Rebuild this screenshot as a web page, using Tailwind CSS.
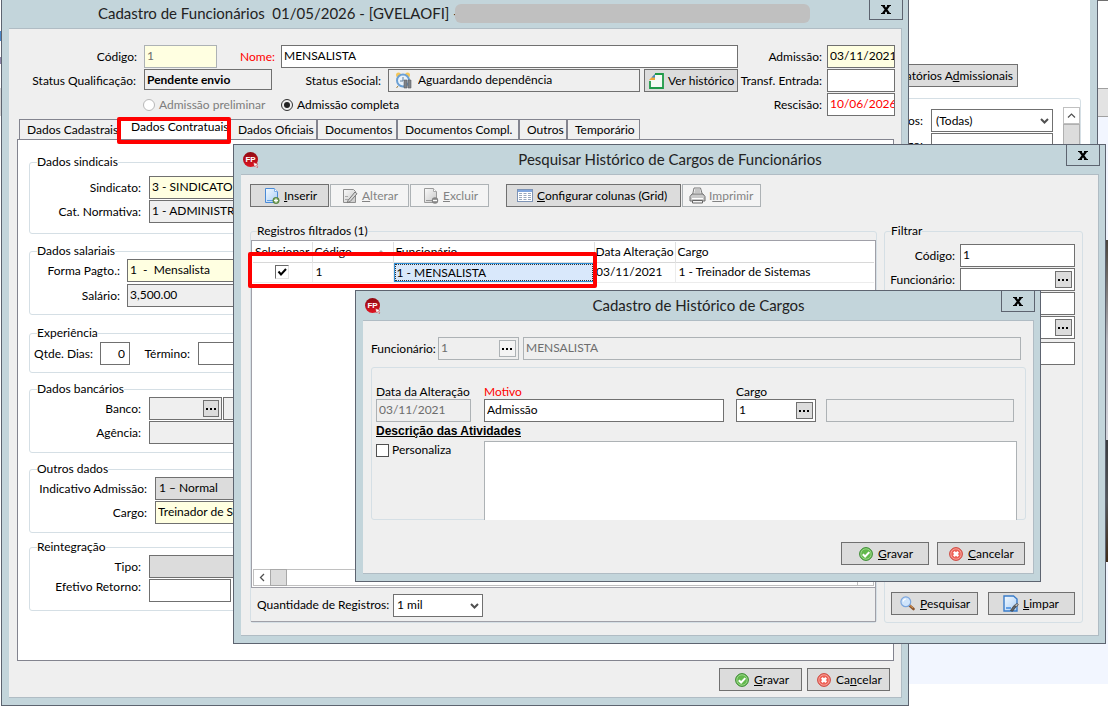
<!DOCTYPE html>
<html lang="pt-BR">
<head>
  <meta charset="UTF-8">
  <title>Cadastro de Funcionários</title>
  <script src="https://cdn.jsdelivr.net/npm/@tailwindcss/browser@4"></script>
</head>
<body class="font-['Lato','Open_Sans',sans-serif] text-[12px] leading-4 text-black">

  <!-- icons -->
  <svg class="absolute h-0 w-0">
    <defs>
      <linearGradient id="gBlue" x1="0" y1="0" x2="1" y2="1"><stop offset="0" stop-color="#f4faff"/><stop offset="1" stop-color="#a9cdf5"/></linearGradient>
      <linearGradient id="gGray" x1="0" y1="0" x2="1" y2="1"><stop offset="0" stop-color="#fafafa"/><stop offset="1" stop-color="#c8c8c8"/></linearGradient>
    </defs>
    <symbol id="cursor" viewBox="0 0 6 6"><path d="M.500.500l4.500 1.500-1.600 1 1.600 2-1 .700-1.600-2-1.200 1z" fill="#fff" stroke="#c01820" stroke-width=".500"/></symbol>
    <symbol id="ok" viewBox="0 0 14 14">
      <circle cx="7" cy="7" r="6.4" fill="#62b84c" stroke="#3c8a34"/>
      <circle cx="7" cy="7" r="5.2" fill="none" stroke="#a8dd98" stroke-width=".8"/>
      <path d="M3.8 7.2l2.3 2.3 4.2-4.4" fill="none" stroke="#fff" stroke-width="2"/>
    </symbol>
    <symbol id="no" viewBox="0 0 14 14">
      <circle cx="7" cy="7" r="6.4" fill="#ee6257" stroke="#cc4a42"/>
      <circle cx="7" cy="7" r="5.2" fill="none" stroke="#f8b3ab" stroke-width=".8"/>
      <path d="M4.8 4.8l4.4 4.4M9.2 4.8L4.8 9.2" stroke="#fff" stroke-width="2.4"/>
    </symbol>
    <symbol id="insert" viewBox="0 0 16 16">
      <path d="M1.5.5h9l3 3v11h-12z" fill="url(#gBlue)" stroke="#4a8ad6"/>
      <path d="M10.5.5v3h3" fill="#fff" stroke="#7fb0e8"/>
      <path d="M3 12.5h7" stroke="#5f9fe6"/>
      <circle cx="12" cy="12.5" r="3.2" fill="#6d9a50" stroke="#4d7838" stroke-width=".6"/>
      <path d="M12 10.5v4M10 12.5h4" stroke="#fff" stroke-width="1.3"/>
    </symbol>
    <symbol id="edit" viewBox="0 0 16 16">
      <path d="M1.5 1.5h10l2 2v11h-12z" fill="url(#gGray)" stroke="#8e8e8e"/>
      <path d="M3 11.5h5M3 8.5h3" stroke="#aaa"/>
      <path d="M6 12.5L13 4l2 1.7-7 8-2.6.9z" fill="#d8d8d8" stroke="#777"/>
    </symbol>
    <symbol id="remove" viewBox="0 0 16 16">
      <path d="M1.5.5h9l3 3v11h-12z" fill="url(#gGray)" stroke="#9a9a9a"/>
      <path d="M10.5.5v3h3" fill="#fff" stroke="#aaa"/>
      <path d="M3 12.5h7" stroke="#999"/>
      <circle cx="12" cy="12.5" r="3.2" fill="#858585"/>
      <path d="M10 12.5h4" stroke="#fff" stroke-width="1.4"/>
    </symbol>
    <symbol id="columns" viewBox="0 0 16 14">
      <rect x=".5" y=".5" width="15" height="12" fill="#fff" stroke="#7d93b5"/>
      <path d="M1 1h14v2H1z" fill="#7fa5dd"/>
      <path d="M2 4.500h3M6.500 4.500h3M11 4.500h3M2 6.500h3M6.500 6.500h3M11 6.500h3M2 8.500h3M6.500 8.500h3M11 8.500h3M2 10.500h3M6.500 10.500h3M11 10.500h3" stroke="#9aa9bd"/>
    </symbol>
    <symbol id="printer" viewBox="0 0 17 17">
      <path d="M3.5 8l1.500-7h6.500l2 7" fill="#f2f2f2" stroke="#7a7a7a"/>
      <path d="M6 3h5M5.500 5h6" stroke="#999"/>
      <path d="M1 14V9.500L3 7h11l2 2.500V14z" fill="#c9c9c9" stroke="#6f6f6f"/>
      <path d="M3 11.500h11" stroke="#fff"/>
      <path d="M3.500 13.500h10V16h-10z" fill="#f4f4f4" stroke="#666"/>
    </symbol>
    <symbol id="lens" viewBox="0 0 15 15">
      <path d="M9 9l4.500 4" stroke="#8a5630" stroke-width="2.600" stroke-linecap="round"/>
      <path d="M9.500 9l3.500 3" stroke="#e09a50" stroke-width="1"/>
      <circle cx="5.800" cy="5.800" r="4.900" fill="#cfe4fb" stroke="#7ba6de" stroke-width="1.200"/>
      <path d="M3.200 5.500a3 3 0 0 1 2.800-2.500" stroke="#fff" fill="none" stroke-width="1.200"/>
    </symbol>
    <symbol id="clean" viewBox="0 0 16 17">
      <path d="M1 1h9.500l3.500 3v12H1z" fill="url(#gBlue)" stroke="#3a7cc9" stroke-width="1.400"/>
      <path d="M3 13h5" stroke="#4a90e0" stroke-width="1.600"/>
      <path d="M7.500 15.500l3.500-5 2 1.300-3.500 4.500z" fill="#666" stroke="#333" stroke-width=".7"/>
      <path d="M11.500 10l2.500-1.500 1.400 1-2 2.500z" fill="#bbb" stroke="#444" stroke-width=".7"/>
    </symbol>
    <symbol id="dots" viewBox="0 0 11 2"><path d="M0 0h2v2H0zM4 0h2v2H4zM8 0h2v2H8z"/></symbol>
    <symbol id="chevron" viewBox="0 0 9 6"><path d="M1 1l3.500 3.500L8 1" fill="none" stroke="#505050" stroke-width="2"/></symbol>
    <symbol id="close" viewBox="0 0 10 9"><path d="M0 .5h4M6 .5h4M0 8.500h4M6 8.500h4" stroke="#000"/><path d="M2 .5l6 8M8 .5l-6 8" stroke="#000" stroke-width="2.200"/></symbol>
  </svg>

  <main class="relative h-screen overflow-hidden bg-white">

    <!-- desktop behind the windows -->
    <div class="absolute left-0 top-0 flex h-full w-px flex-col">
      <div class="h-[31px]"></div>
      <div class="h-[10px] bg-[#4a86c8]"></div>
      <div class="mt-[16px] h-[7px] bg-[#8f86a8]"></div>
      <div class="mt-[24px] h-[28px] bg-[#d8d8d8]"></div>
    </div>
    <div class="absolute right-0 top-0 flex h-full w-[200px] flex-col">
      <div class="h-[88px] border-t border-[#707070] bg-white"></div>
      <div class="h-[29px] border-y border-[#a0a0a0] bg-[#e3e3e3]"></div>
      <div class="h-[123px] bg-[#f2f6ff]"></div>
      <div class="h-[200px] bg-linear-to-b from-[#4a443c] via-[#b4b4bc] to-[#d6d6de]"></div>
      <div class="h-[122px] bg-linear-to-b from-[#3a3c40] via-[#55585c] to-[#402c18]"></div>
      <div class="h-[122px] bg-[#f2f6ff]"></div>
    </div>

    <section class="absolute left-[700px] top-0 flex h-[500px] w-[398px] flex-col border-r border-[#5d6470] bg-[#c3d5db] pr-[7px]">
      <div class="flex-1 bg-white pt-[64px]">
        <button class="ml-[180px] block h-[23px] w-[138px] border border-[#707070] bg-[#dcdcdc] pr-1 text-right whitespace-nowrap">Relatórios A<u>d</u>missionais</button>
        <div class="mr-[9px] mt-[11px] flex h-[300px] items-start justify-end rounded-[3px] border border-[#d5dfe5] pt-[8px]">
          <div class="flex w-[223px] flex-col gap-px pt-[2px]">
            <div class="flex items-center">
              <label for="bgVinc" class="w-[101px] pr-[8px] text-right">Vínculos:</label>
              <span class="relative flex-1">
                <select id="bgVinc" class="h-[23px] w-full appearance-none border border-[#707070] bg-white pl-1"><option>(Todas)</option></select>
                <svg class="pointer-events-none absolute right-1 top-[9px] h-[6px] w-[9px]"><use href="#chevron"/></svg>
              </span>
            </div>
            <div class="flex items-center">
              <label for="bgCargo" class="w-[101px] pr-[8px] text-right">Cargo:</label>
              <input id="bgCargo" class="h-[23px] min-w-0 flex-1 border border-[#707070] bg-white">
            </div>
          </div>
          <div class="ml-[10px] flex w-[17px] flex-col">
            <button aria-label="Subir" class="flex h-[17px] items-center justify-center border border-[#c0c0c0] bg-white">
              <svg viewBox="0 0 9 5" class="h-[5px] w-[9px]"><path d="M1 4.500L4.500 1 8 4.500" fill="none" stroke="#505050" stroke-width="1.200"/></svg>
            </button>
            <div class="h-[120px] border border-[#b0b0b0] bg-[#dcdcdc]"></div>
          </div>
        </div>
      </div>
    </section>

    <!-- Cadastro de Funcionários -->
    <section class="absolute -top-[2px] left-[1px] flex h-[708px] w-[908px] flex-col border border-[#5d6470] bg-[#c3d5db] pb-[7px] pl-[7px] pr-[6px]">
      <header class="flex h-[29px] items-center">
        <h1 class="ml-[89px] w-[357px] pb-[2px] text-[15px] leading-5 whitespace-pre text-[#222]">Cadastro de Funcionários  01/05/2026 - [GVELAOFI] -</h1>
        <div class="h-[19px] w-[355px] rounded-[6px] bg-[#c0c0c0]"></div>
        <button aria-label="Fechar" class="-mr-px -mt-px ml-auto flex h-[22px] w-[34px] items-center justify-center self-start border border-[#5d6470]"><svg class="h-[9px] w-[10px]"><use href="#close"/></svg></button>
      </header>

      <div class="flex flex-1 flex-col border-y border-r border-[#b0bcc4] bg-[#efefef]">
        <div class="flex pr-[6px] pt-4">
          <div class="flex flex-1 flex-col gap-px">
            <div class="flex h-[23px] items-center">
              <label for="codigo" class="w-[135px] pr-[7px] text-right">Código:</label>
              <input id="codigo" value="1" disabled class="h-[23px] w-[73px] border border-[#adb2b5] bg-[#ffffe1] pb-[2px] pl-[2px] text-[#6d6d6d]">
              <label for="nome" class="w-[64px] pr-[6px] text-right text-[#f00]">Nome:</label>
              <input id="nome" value="MENSALISTA" class="h-[23px] min-w-0 flex-1 border border-[#707070] bg-white pb-[2px] pl-[2px]">
            </div>
            <div class="flex h-[23px] items-center">
              <label for="qualif" class="w-[135px] pr-[8px] text-right whitespace-nowrap">Status Qualificação:</label>
              <input id="qualif" value="Pendente envio" readonly class="h-[21px] w-[128px] self-start border border-[#707070] pl-[2px] font-bold">
              <label for="esocial" class="w-[116px] pr-[7px] text-right">Status eSocial:</label>
              <div class="flex h-[23px] min-w-0 flex-1 items-center gap-[6px] border border-[#707070] pl-[6px]">
                <svg viewBox="0 0 17 17" class="h-[17px] w-[17px] shrink-0">
                  <circle cx="3.500" cy="3" r="2.500" fill="#f3c65a"/><circle cx="12.500" cy="3" r="2.500" fill="#f3c65a"/>
                  <path d="M3 14l-1.500 2M13 14l1.500 2" stroke="#a08040"/>
                  <circle cx="8" cy="8.500" r="6" fill="#eaf3fb" stroke="#6ba0d4" stroke-width="2"/>
                  <path d="M8 5v4h-3" fill="none" stroke="#6080a0"/>
                  <path d="M9 8h3v8H9zM13 8h3v8h-3z" fill="#808488" stroke="#5c6064" stroke-width=".600"/>
                </svg>
                <input id="esocial" value="Aguardando dependência" readonly class="min-w-0 flex-1 pb-[2px]">
              </div>
              <button class="ml-1 flex h-[23px] w-[94px] items-center gap-[4px] border border-[#707070] bg-[#dcdcdc] pl-[4px] whitespace-nowrap">
                <svg viewBox="0 0 15 16" class="h-[16px] w-[15px] shrink-0">
                  <path d="M6 1h8v14H1V8" fill="#f4faf4" stroke="#1f9a48" stroke-width="1.800"/>
                  <path d="M0 7l6-6v6z" fill="#f0a838"/><path d="M2.500 4.500L6 1v3.500z" fill="#3a88c8"/>
                </svg>
                Ver histórico
              </button>
            </div>
            <div class="flex h-[23px] items-center">
              <label class="ml-[134px] flex w-[138px] items-center gap-[4px] whitespace-nowrap text-[#7d7d7d]">
                <input type="radio" name="adm" disabled class="h-[12px] w-[12px] appearance-none rounded-full border border-[#b8b8b8] bg-white">Admissão preliminar
              </label>
              <label class="flex items-center gap-[4px] whitespace-nowrap">
                <input type="radio" name="adm" checked class="h-[12px] w-[12px] appearance-none rounded-full border border-[#333] bg-[#222] bg-clip-content p-[2px]">Admissão completa
              </label>
            </div>
          </div>
          <div class="flex w-[157px] flex-col gap-px">
            <div class="flex items-center justify-end gap-[5px]">
              <label for="admissao">Admissão:</label>
              <input id="admissao" value="03/11/2021" class="h-[23px] w-[68px] border border-[#707070] bg-[#ffffe1] pb-[2px] pl-[2px]">
            </div>
            <div class="flex items-center justify-end gap-[5px]">
              <label for="transf" class="whitespace-nowrap">Transf. Entrada:</label>
              <input id="transf" class="h-[23px] w-[68px] border border-[#707070] bg-white pb-[2px] pl-[2px]">
            </div>
            <div class="flex items-center justify-end gap-[5px]">
              <label for="rescisao">Rescisão:</label>
              <input id="rescisao" value="10/06/2026" class="h-[23px] w-[68px] border border-[#707070] bg-white pb-[2px] pl-[2px] text-[#f00]">
            </div>
          </div>
        </div>

        <!-- tabs -->
        <div role="tablist" class="mt-[3px] flex h-5 pl-[10px] whitespace-nowrap">
          <button role="tab" class="w-[100px] border-l border-t border-[#83848f] bg-[#f0f0f0] pl-[7px] text-left">Dados Cadastrais</button>
          <button role="tab" aria-selected="true" class="relative w-[112px] bg-white pb-[4px] pl-[12px] text-left">Dados Contratuais<span class="absolute -left-[2px] -top-[2px] h-[27px] w-[114px] rounded-[2px] border-4 border-[#f00]"></span></button>
          <button role="tab" class="w-[86px] border-r border-t border-[#83848f] bg-[#f0f0f0] pl-[7px] text-left">Dados Oficiais</button>
          <button role="tab" class="w-[80px] border-x border-t border-[#83848f] bg-[#f0f0f0] pl-[7px] text-left">Documentos</button>
          <button role="tab" class="w-[122px] border-x border-t border-[#83848f] bg-[#f0f0f0] pl-[7px] text-left">Documentos Compl.</button>
          <button role="tab" class="w-[48px] border-x border-t border-[#83848f] bg-[#f0f0f0] pl-[7px] text-left">Outros</button>
          <button role="tab" class="w-[73px] border-x border-t border-[#83848f] bg-[#f0f0f0] pl-[7px] text-left">Temporário</button>
        </div>

        <div class="ml-[8px] mr-[7px] flex flex-1 flex-col border border-[#83848f] bg-white px-[11px] pt-[14px]">
          <fieldset class="flex flex-col gap-px rounded-[3px] border border-[#d5dfe5] pb-[10px] pt-[6px]">
            <legend class="ml-[7px]">Dados sindicais</legend>
            <div class="flex items-center"><label for="sindicato" class="w-[119px] pr-[8px] text-right">Sindicato:</label><input id="sindicato" value="3 - SINDICATO TRABALHADORES" class="h-[23px] flex-1 border border-[#707070] bg-[#ffffe1] pb-[2px] pl-[2px]"></div>
            <div class="flex items-center"><label for="catnorm" class="w-[119px] pr-[8px] text-right">Cat. Normativa:</label><input id="catnorm" value="1 - ADMINISTRATIVO" class="h-[23px] flex-1 border border-[#707070] bg-[#efefef] pb-[2px] pl-[2px]"></div>
          </fieldset>
          <fieldset class="mt-[9px] flex flex-col gap-[2px] rounded-[3px] border border-[#d5dfe5] pb-[7px]">
            <legend class="ml-[7px]">Dados salariais</legend>
            <div class="flex items-center"><label for="forma" class="w-[97px] pr-[7px] text-right">Forma Pagto.:</label><input id="forma" value="1  -  Mensalista" class="h-[23px] flex-1 border border-[#707070] bg-[#ffffe1] pb-[2px] pl-[2px]"></div>
            <div class="flex items-center"><label for="salario" class="w-[97px] pr-[7px] text-right">Salário:</label><input id="salario" value="3,500.00" class="h-[23px] flex-1 border border-[#707070] bg-[#efefef] pb-[2px] pl-[2px]"></div>
          </fieldset>
          <fieldset class="mt-[10px] rounded-[3px] border border-[#d5dfe5] pb-[7px] pt-px">
            <legend class="ml-[7px]">Experiência</legend>
            <div class="flex items-center">
              <label for="dias" class="w-[70px] pr-[7px] text-right">Qtde. Dias:</label>
              <input id="dias" value="0" class="h-[23px] w-[30px] border border-[#707070] bg-white px-1 text-right">
              <label for="termino" class="w-[68px] pr-[8px] text-right">Término:</label>
              <input id="termino" class="h-[23px] w-[80px] border border-[#707070] bg-white pb-[2px] pl-[2px]">
            </div>
          </fieldset>
          <fieldset class="mt-[8px] flex flex-col gap-px rounded-[3px] border border-[#d5dfe5] pb-[8px]">
            <legend class="ml-[7px]">Dados bancários</legend>
            <div class="flex items-center">
              <label for="banco" class="w-[119px] pr-[8px] text-right">Banco:</label>
              <div class="flex h-[23px] w-[73px] items-center border border-[#707070] bg-[#efefef] pr-[2px]">
                <input id="banco" class="min-w-0 flex-1"><button aria-label="Buscar banco" class="flex h-[17px] w-[16px] items-center justify-center border border-[#707070] bg-[#dcdcdc]"><svg class="h-[2px] w-[11px]"><use href="#dots"/></svg></button>
              </div>
              <input aria-label="Nome do banco" class="ml-px h-[23px] flex-1 border border-[#707070] bg-[#efefef]">
            </div>
            <div class="flex items-center"><label for="agencia" class="w-[119px] pr-[8px] text-right">Agência:</label><input id="agencia" class="h-[23px] flex-1 border border-[#707070] bg-[#efefef]"></div>
          </fieldset>
          <fieldset class="mt-[8px] flex flex-col gap-px rounded-[3px] border border-[#d5dfe5] pb-[8px]">
            <legend class="ml-[7px]">Outros dados</legend>
            <div class="flex items-center"><label for="indic" class="w-[125px] pr-[8px] text-right whitespace-nowrap">Indicativo Admissão:</label><select id="indic" class="h-[23px] flex-1 appearance-none border border-[#707070] bg-[#dcdcdc] pb-[2px] pl-[3px]"><option>1 – Normal</option></select></div>
            <div class="flex items-center"><label for="cargo1" class="w-[125px] pr-[8px] text-right">Cargo:</label><input id="cargo1" value="Treinador de Sistemas" class="h-[23px] flex-1 border border-[#707070] bg-[#ffffe1] pb-[2px] pl-[2px]"></div>
          </fieldset>
          <fieldset class="mt-[6px] flex flex-col gap-px rounded-[3px] border border-[#d5dfe5] pb-[8px]">
            <legend class="ml-[7px]">Reintegração</legend>
            <div class="flex items-center"><label for="tipo" class="w-[119px] pr-[8px] text-right">Tipo:</label><select id="tipo" class="h-[23px] flex-1 appearance-none border border-[#707070] bg-[#dcdcdc]"><option></option></select></div>
            <div class="flex items-start"><label for="retorno" class="w-[119px] pr-[8px] text-right">Efetivo Retorno:</label><input id="retorno" class="h-[23px] w-[82px] border border-[#707070] bg-white pb-[2px] pl-[2px]"></div>
          </fieldset>
        </div>

        <div class="flex justify-end gap-[5px] pb-[6px] pr-[11px] pt-[7px]">
          <button class="flex h-[23px] w-[83px] items-center gap-[5px] border border-[#707070] bg-[#dcdcdc] pl-[15px]"><svg class="h-[14px] w-[14px]"><use href="#ok"/></svg><span><u>G</u>ravar</span></button>
          <button class="flex h-[23px] w-[83px] items-center gap-[5px] border border-[#707070] bg-[#dcdcdc] pl-[9px]"><svg class="h-[14px] w-[14px]"><use href="#no"/></svg><span>Ca<u>n</u>celar</span></button>
        </div>
      </div>
    </section>

    <!-- Pesquisar Histórico -->
    <section class="absolute left-[233px] top-[144px] flex h-[500px] w-[873px] flex-col border border-[#5d6470] bg-[#c3d5db] pb-[7px] pl-[7px] pr-[6px]">
      <header class="grid h-[29px] grid-cols-[1fr_auto_1fr] items-center">
        <span class="relative ml-[2px] flex h-[15px] w-[15px] items-center justify-center rounded-full bg-linear-to-b from-[#8f0a12] to-[#e01422] font-['Liberation_Sans',sans-serif] text-[8px] leading-none font-bold text-white">FP<svg class="absolute -bottom-px -right-px h-[6px] w-[6px]"><use href="#cursor"/></svg></span>
        <h2 class="pb-[2px] text-[15px] leading-5 text-[#222]">Pesquisar Histórico de Cargos de Funcionários</h2>
        <button aria-label="Fechar" class="-mr-px -mt-px flex h-[22px] w-[34px] items-center justify-center self-start justify-self-end border border-[#5d6470]"><svg class="h-[9px] w-[10px]"><use href="#close"/></svg></button>
      </header>

      <div class="flex flex-1 flex-col border-y border-r border-[#b0bcc4] bg-[#efefef] pb-[12px] pl-[9px] pr-[15px] pt-[9px]">
        <div class="flex gap-px whitespace-nowrap">
          <button class="flex h-[23px] w-[79px] items-center gap-[4px] border border-[#707070] bg-[#dcdcdc] pl-[13px]"><svg class="h-4 w-4"><use href="#insert"/></svg><span><u>I</u>nserir</span></button>
          <button disabled class="flex h-[23px] w-[79px] items-center gap-[4px] border border-[#adb2b5] bg-[#f4f4f4] pl-[11px] text-[#838383]"><svg class="h-4 w-4"><use href="#edit"/></svg><span><u>A</u>lterar</span></button>
          <button disabled class="flex h-[23px] w-[79px] items-center gap-[4px] border border-[#adb2b5] bg-[#f4f4f4] pl-[12px] text-[#838383]"><svg class="h-4 w-4"><use href="#remove"/></svg><span><u>E</u>xcluir</span></button>
          <button class="ml-4 flex h-[23px] w-[175px] items-center gap-[4px] border border-[#707070] bg-[#dcdcdc] pl-[10px]"><svg class="h-[14px] w-4"><use href="#columns"/></svg><span><u>C</u>onfigurar colunas (Grid)</span></button>
          <button disabled class="flex h-[23px] w-[79px] items-center gap-[3px] border border-[#adb2b5] bg-[#f4f4f4] pl-[6px] text-[#838383]"><svg class="h-[17px] w-[17px]"><use href="#printer"/></svg><span>I<u>m</u>primir</span></button>
        </div>

        <div class="mt-4 flex flex-1 gap-[7px]">
          <fieldset class="flex min-w-0 flex-1 flex-col rounded-[3px] border border-[#d5dfe5] pt-px">
            <legend class="ml-[6px]">Registros filtrados (1)</legend>
            <div class="relative flex flex-1 flex-col border border-[#a0a0a8] bg-white p-px">
              <table class="w-full table-fixed border-collapse whitespace-nowrap">
                <thead>
                  <tr class="h-[20px] border-b border-[#d8d8d8] text-left align-middle">
                    <th class="w-[59px] border-r border-[#e0e0e0] pl-[2px] font-normal">Selecionar</th>
                    <th class="w-[81px] border-r border-[#e0e0e0] pl-[2px] pr-[8px] font-normal"><span class="flex items-center justify-between">Código<svg viewBox="0 0 8 4" class="h-1 w-2"><path d="M0 4l4-4 4 4z" fill="#a8a8a8"/></svg></span></th>
                    <th class="w-[201px] border-r border-[#e0e0e0] pl-[2px] font-normal">Funcionário</th>
                    <th class="w-[81px] border-r border-[#e0e0e0] pl-px font-normal">Data Alteração</th>
                    <th class="pl-[2px] font-normal">Cargo</th>
                  </tr>
                </thead>
                <tbody>
                  <tr class="h-[20px] border-b border-[#ececec]">
                    <td class="border-r border-[#ececec]">
                      <label class="relative mx-auto block h-[14px] w-[14px]">
                        <input type="checkbox" checked aria-label="Selecionar registro" class="block h-[14px] w-[14px] appearance-none border border-b-[#e3e3e3] border-l-[#696969] border-r-[#e3e3e3] border-t-[#696969] bg-white">
                        <svg viewBox="0 0 14 14" class="pointer-events-none absolute left-0 top-0 h-[14px] w-[14px]"><path d="M3.500 6.500l2.500 3 5-5.500" fill="none" stroke="#000" stroke-width="2"/></svg>
                      </label>
                    </td>
                    <td class="border-r border-[#ececec] pl-[3px]">1</td>
                    <td class="p-0"><div class="flex h-[19px] items-center border border-[#2f8fd8] bg-[#d9e8fb]"><div class="h-[17px] flex-1 border border-dotted border-[#333] pl-px leading-[15px]">1 - MENSALISTA</div></div></td>
                    <td class="border-r border-[#ececec] pl-[2px]">03/11/2021</td>
                    <td class="pl-[3px]">1 - Treinador de Sistemas</td>
                  </tr>
                </tbody>
              </table>
              <div class="absolute -left-[4px] top-[11px] h-[36px] w-[349px] rounded-[2px] border-4 border-[#f00]"></div>
              <div class="mt-auto flex h-[17px] border border-[#c0c0c0] bg-white">
                <button aria-label="Rolar à esquerda" class="flex w-4 items-center justify-center"><svg viewBox="0 0 6 9" class="h-[9px] w-[6px]"><path d="M5 1L1.500 4.500 5 8" fill="none" stroke="#505050" stroke-width="1.300"/></svg></button>
                <div class="-my-px w-[17px] border border-[#a8a8a8] bg-[#dcdcdc]"></div>
                <div class="ml-auto w-4 border-l border-[#c0c0c0]"></div>
              </div>
            </div>
            <div class="flex h-[34px] items-center border-b border-r border-[#a0a0a8] pl-[6px] pt-px">
              <label for="qtd" class="w-[136px] whitespace-nowrap">Quantidade de Registros:</label>
              <span class="relative w-[90px]">
                <select id="qtd" class="block h-[23px] w-full appearance-none border border-[#707070] bg-white pl-[3px]"><option>1 mil</option></select>
                <svg class="pointer-events-none absolute right-1 top-[9px] h-[6px] w-[9px]"><use href="#chevron"/></svg>
              </span>
            </div>
          </fieldset>

          <fieldset class="flex w-[199px] shrink-0 flex-col gap-px rounded-[3px] border border-[#d5dfe5] pb-[7px] pl-[5px] pr-[7px] pt-[5px]">
            <legend class="ml-[1px]">Filtrar</legend>
            <div class="flex items-center"><label for="fCod" class="w-[70px] pr-[5px] text-right">Código:</label><input id="fCod" value="1" class="h-[23px] w-0 min-w-0 flex-1 border border-[#707070] bg-white pb-[2px] pl-[2px]"></div>
            <div class="flex items-center">
              <label for="fFunc" class="flex w-[70px] justify-end pr-[5px]">Funcionário:</label>
              <div class="flex h-[23px] w-0 min-w-0 flex-1 items-center border border-[#707070] bg-white pr-[2px]"><input id="fFunc" class="w-0 min-w-0 flex-1"><button aria-label="Buscar funcionário" class="flex h-[17px] w-[17px] items-center justify-center border border-[#707070] bg-[#dcdcdc]"><svg class="h-[2px] w-[11px]"><use href="#dots"/></svg></button></div>
            </div>
            <div class="flex items-center"><label for="fData" class="w-[70px] pr-[5px] text-right">Data:</label><input id="fData" class="h-[23px] w-0 min-w-0 flex-1 border border-[#707070] bg-white pb-[2px] pl-[2px]"></div>
            <div class="flex items-center">
              <label for="fCargo" class="w-[70px] pr-[5px] text-right">Cargo:</label>
              <div class="flex h-[23px] w-0 min-w-0 flex-1 items-center border border-[#707070] bg-white pr-[2px]"><input id="fCargo" class="w-0 min-w-0 flex-1"><button aria-label="Buscar cargo" class="flex h-[17px] w-[17px] items-center justify-center border border-[#707070] bg-[#dcdcdc]"><svg class="h-[2px] w-[11px]"><use href="#dots"/></svg></button></div>
            </div>
            <div class="mt-[2px] flex items-center"><label for="fMot" class="w-[70px] pr-[5px] text-right">Motivo:</label><input id="fMot" class="h-[23px] w-0 min-w-0 flex-1 border border-[#707070] bg-white pb-[2px] pl-[2px]"></div>
            <div class="mt-auto flex justify-between pl-px">
              <button class="flex h-[23px] w-[87px] items-center gap-[5px] border border-[#707070] bg-[#dcdcdc] pl-[8px]"><svg class="h-[15px] w-[15px]"><use href="#lens"/></svg><span><u>P</u>esquisar</span></button>
              <button class="flex h-[23px] w-[87px] items-center gap-[4px] border border-[#707070] bg-[#dcdcdc] pl-[14px]"><svg class="h-[17px] w-4"><use href="#clean"/></svg><span><u>L</u>impar</span></button>
            </div>
          </fieldset>
        </div>
      </div>
    </section>

    <!-- Cadastro de Histórico de Cargos -->
    <section class="absolute left-[355px] top-[290px] flex w-[686px] flex-col border border-[#5d6470] bg-[#c3d5db] pb-[7px] pl-[7px] pr-[6px]">
      <header class="grid h-[29px] grid-cols-[1fr_auto_1fr] items-center">
        <span class="relative ml-[2px] flex h-[15px] w-[15px] items-center justify-center rounded-full bg-linear-to-b from-[#8f0a12] to-[#e01422] font-['Liberation_Sans',sans-serif] text-[8px] leading-none font-bold text-white">FP<svg class="absolute -bottom-px -right-px h-[6px] w-[6px]"><use href="#cursor"/></svg></span>
        <h2 class="pb-[2px] text-[15px] leading-5 text-[#222]">Cadastro de Histórico de Cargos</h2>
        <button aria-label="Fechar" class="-mr-px -mt-px flex h-[22px] w-[34px] items-center justify-center self-start justify-self-end border border-[#5d6470]"><svg class="h-[9px] w-[10px]"><use href="#close"/></svg></button>
      </header>

      <div class="border-y border-r border-[#b0bcc4] bg-[#efefef] pb-[8px] pl-[8px] pr-[7px] pt-4">
        <div class="flex items-center pr-[5px]">
          <label for="hFunc" class="w-[67px] whitespace-nowrap">Funcionário:</label>
          <div class="flex h-[23px] w-[81px] items-center border border-[#adb2b5] pl-[2px] pr-[2px]"><input id="hFunc" value="1" disabled class="min-w-0 flex-1 pb-[2px] text-[#6d6d6d]"><button disabled aria-label="Buscar funcionário" class="flex h-[17px] w-[17px] items-center justify-center border border-[#adb2b5] bg-[#f4f4f4]"><svg class="h-[2px] w-[11px]"><use href="#dots"/></svg></button></div>
          <input aria-label="Nome do funcionário" value="MENSALISTA" disabled class="ml-1 h-[23px] min-w-0 flex-1 border border-[#adb2b5] pb-[2px] pl-[2px] text-[#6d6d6d]">
        </div>

        <div class="mt-[7px] rounded-[3px] border border-[#d5dfe5] pl-1 pr-[8px] pt-4">
          <div class="flex items-end pr-[3px] leading-[15px]">
            <div class="mr-[13px] w-[95px]">
              <label for="hData" class="block whitespace-nowrap">Data da Alteração</label>
              <input id="hData" value="03/11/2021" disabled class="block h-[23px] w-full border border-[#adb2b5] pb-[2px] pl-[2px] text-[#6d6d6d]">
            </div>
            <div class="mr-[12px] w-[240px]">
              <label for="hMotivo" class="block text-[#f00]">Motivo</label>
              <input id="hMotivo" value="Admissão" class="block h-[23px] w-full border border-[#707070] bg-white pb-[2px] pl-[2px]">
            </div>
            <div class="mr-[10px] w-[80px]">
              <label for="hCargo" class="block">Cargo</label>
              <div class="flex h-[23px] items-center border border-[#707070] bg-white px-[2px]"><input id="hCargo" value="1" class="min-w-0 flex-1 pb-[2px]"><button aria-label="Buscar cargo" class="flex h-[17px] w-[17px] items-center justify-center border border-[#707070] bg-[#dcdcdc]"><svg class="h-[2px] w-[11px]"><use href="#dots"/></svg></button></div>
            </div>
            <input aria-label="Nome do cargo" disabled class="h-[23px] min-w-0 flex-1 border border-[#adb2b5]">
          </div>
          <h3 class="mt-px font-['Liberation_Sans',Arial,sans-serif] text-[12px] leading-4 font-bold underline">Descrição das Atividades</h3>
          <div class="-mb-px mt-[2px] flex">
            <label class="flex w-[108px] items-center gap-[3px] self-start pt-px">
              <input type="checkbox" class="h-[13px] w-[13px] appearance-none border border-[#505050] bg-white">Personaliza
            </label>
            <textarea aria-label="Descrição das Atividades" class="block h-[79px] flex-1 resize-none border border-b-0 border-[#adb2b5] bg-white p-1"></textarea>
          </div>
        </div>

        <div class="mt-[22px] flex justify-end gap-[8px] pr-px">
          <button class="flex h-[23px] w-[88px] items-center gap-[5px] border border-[#707070] bg-[#dcdcdc] pl-[17px]"><svg class="h-[14px] w-[14px]"><use href="#ok"/></svg><span><u>G</u>ravar</span></button>
          <button class="flex h-[23px] w-[88px] items-center gap-[5px] border border-[#707070] bg-[#dcdcdc] pl-[11px]"><svg class="h-[14px] w-[14px]"><use href="#no"/></svg><span><u>C</u>ancelar</span></button>
        </div>
      </div>
    </section>

  </main>
</body>
</html>
